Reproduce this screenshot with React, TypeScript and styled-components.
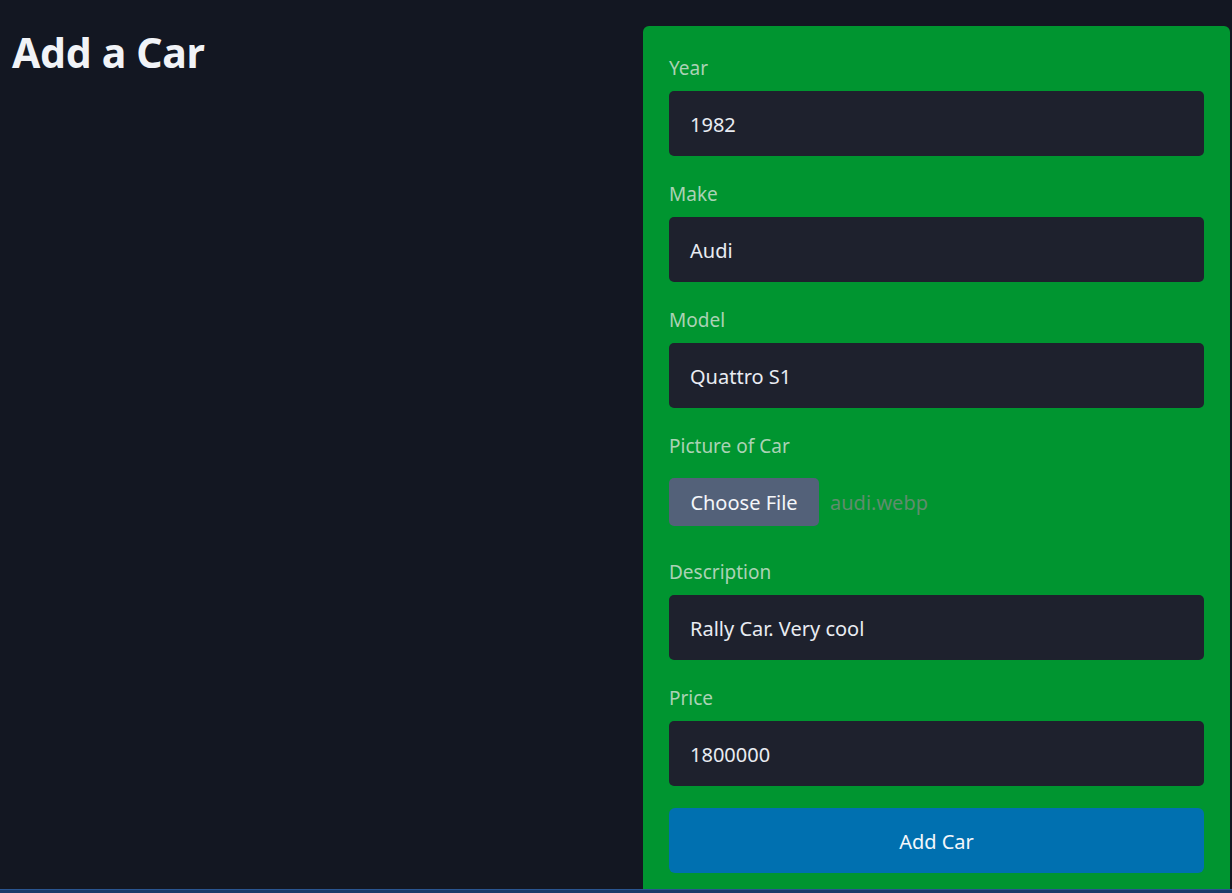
import React from "react";
import styled, { createGlobalStyle } from "styled-components";

const Global = createGlobalStyle`
  html, body { margin: 0; padding: 0; background: #131722; }
  body { font-family: "Noto Sans", "Open Sans", "Liberation Sans", sans-serif; color: #e9ecf2; }
  * { box-sizing: border-box; }
`;

const Page = styled.div`
  min-height: 893px;
  display: flex;
  flex-direction: column;
  background: #131722;
`;

const Main = styled.main`
  flex: 1;
  display: grid;
  grid-template-columns: 1fr 587px;
  padding: 26px 2px 0 0;
`;

const Title = styled.h1`
  margin: -3px 0 0 12px;
  font-size: 41px;
  line-height: 58px;
  font-weight: 700;
  letter-spacing: -0.3px;
  color: #f1f3f7;
`;

const Card = styled.form`
  background: #009530;
  border-radius: 6px 6px 0 0;
  padding: 27px 26px 16px 26px;
  display: flex;
  flex-direction: column;
`;

const Field = styled.div<{ $gap?: number }>`
  display: flex;
  flex-direction: column;
  margin-bottom: ${(p) => p.$gap ?? 23}px;
`;

const Label = styled.label`
  font-size: 19px;
  line-height: 29px;
  padding-top: 1px;
  color: #abd2b5;
  margin-bottom: 8px;
`;

const Input = styled.div`
  height: 65px;
  background: #1e212d;
  border-radius: 5px;
  display: flex;
  align-items: center;
  padding: 2px 0 0 21px;
  font-size: 20px;
  color: #e9ecf2;
`;

const FileRow = styled.div`
  height: 65px;
  display: flex;
  align-items: center;
  gap: 11px;
`;

const FileButton = styled.span`
  width: 150px;
  height: 48px;
  background: #536179;
  border-radius: 5px;
  display: flex;
  align-items: center;
  justify-content: center;
  padding-top: 1px;
  font-size: 20px;
  color: #f4f6f9;
`;

const FileName = styled.span`
  font-size: 20px;
  padding-top: 1px;
  color: #5f8d6d;
`;

const Submit = styled.button`
  height: 65px;
  border: none;
  border-radius: 6px;
  background: #0070b0;
  color: #f4f7fb;
  font-family: inherit;
  font-size: 20px;
  padding-top: 2px;
  cursor: pointer;
`;

const BottomBar = styled.div`
  height: 4px;
  background: #19396a;
  border-top: 1px solid #2a5590;
`;

const fields = [
  { label: "Year", value: "1982" },
  { label: "Make", value: "Audi" },
  { label: "Model", value: "Quattro S1" },
];

const fields2 = [
  { label: "Description", value: "Rally Car. Very cool", gap: 23 },
  { label: "Price", value: "1800000", gap: 22 },
];

export default function App() {
  return (
    <Page>
      <Global />
      <Main>
        <div>
          <Title>Add a Car</Title>
        </div>
        <Card onSubmit={(e) => e.preventDefault()}>
          {fields.map((f) => (
            <Field key={f.label}>
              <Label>{f.label}</Label>
              <Input>{f.value}</Input>
            </Field>
          ))}
          <Field>
            <Label>Picture of Car</Label>
            <FileRow>
              <FileButton>Choose File</FileButton>
              <FileName>audi.webp</FileName>
            </FileRow>
          </Field>
          {fields2.map((f) => (
            <Field key={f.label} $gap={f.gap}>
              <Label>{f.label}</Label>
              <Input>{f.value}</Input>
            </Field>
          ))}
          <Submit type="submit">Add Car</Submit>
        </Card>
      </Main>
      <BottomBar />
    </Page>
  );
}
